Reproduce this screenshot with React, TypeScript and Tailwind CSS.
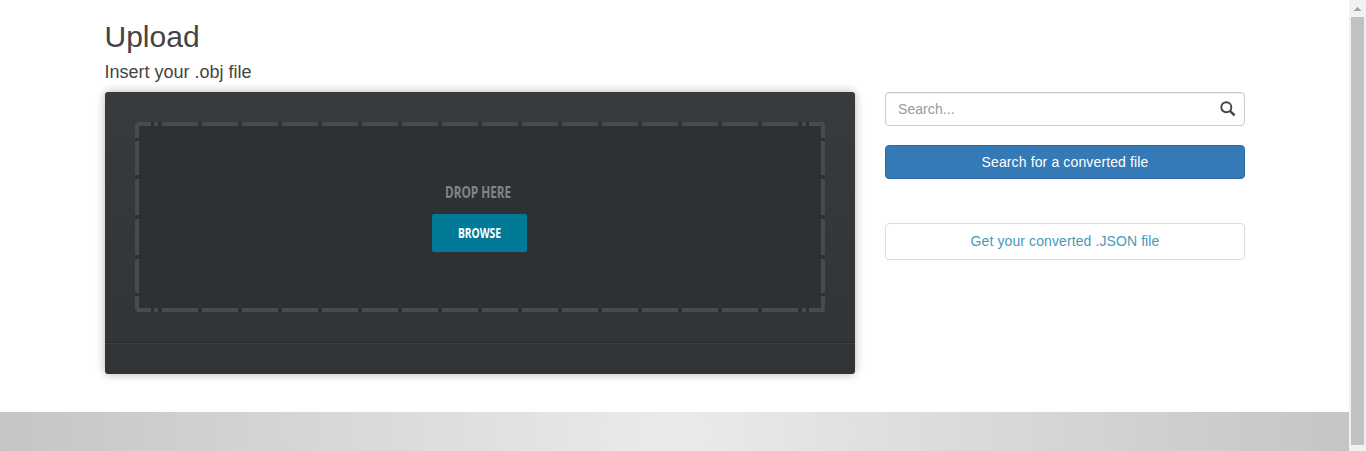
import React from "react";

const verticalDashes = [
  [19, 34],
  [57, 36],
  [97, 36],
  [137, 34],
];

function DashedFrame() {
  return (
    <svg className="absolute inset-0" width="690" height="190" fill="#464b4d" shapeRendering="crispEdges">
      <path d="M2 0H16V4H4V16H0V2L2 0Z" />
      <path d="M688 0H674V4H686V16H690V2L688 0Z" />
      <path d="M2 190H16V186H4V174H0V188L2 190Z" />
      <path d="M688 190H674V186H686V174H690V188L688 190Z" />
      {[0, 186].map((y) => (
        <g key={y}>
          <rect x="19" y={y} width="4" height="4" />
          <rect x="667" y={y} width="4" height="4" />
          {Array.from({ length: 16 }, (_, i) => (
            <rect key={i} x={27 + i * 40} y={y} width="36" height="4" />
          ))}
        </g>
      ))}
      {[0, 686].map((x) => (
        <g key={x}>
          {verticalDashes.map(([y, h]) => (
            <rect key={y} x={x} y={y} width="4" height={h} />
          ))}
        </g>
      ))}
    </svg>
  );
}

function DropPanel() {
  return (
    <section className="h-[282px] w-[750px] shrink-0 rounded-[3px] bg-linear-to-b from-[#373b3d] to-[#303437] shadow-[0_0_10px_rgba(0,0,0,0.3)]">
      <div className="h-[251px] border-b border-[#292c2e] p-[30px]">
        <div className="relative flex h-[190px] w-[690px] flex-col items-center rounded-[3px] bg-[#2e3134] pt-[59px] pr-[2px] font-['Open_Sans',sans-serif] font-bold">
          <DashedFrame />
          <div className="mr-[2px] h-[22px] origin-center scale-x-[0.735] text-[16px] leading-[22px] whitespace-nowrap text-[#7f858a]">
            DROP HERE
          </div>
          <button className="mt-[11px] flex h-[38px] w-[95px] items-center justify-center rounded-[2px] bg-[#007a96] pb-[2px] text-[14px] text-white">
            <span className="scale-x-[0.73]">BROWSE</span>
          </button>
        </div>
      </div>
      <div className="h-px bg-[#3b4043]" />
    </section>
  );
}

function SearchColumn() {
  return (
    <aside className="ml-[30px] w-[360px] shrink-0 text-[14px]">
      <div className="flex h-[34px] items-center justify-between rounded-[4px] border border-[#ccc] pr-2 pl-3 shadow-[inset_0_1px_1px_rgba(0,0,0,0.075)]">
        <span className="tracking-[0.07px] text-[#999]">Search...</span>
        <svg width="16" height="16" viewBox="0 0 16 16" fill="none" stroke="#444">
          <circle cx="6.3" cy="6.2" r="5" strokeWidth="1.9" />
          <path d="M9.9 9.8L14.6 14.3" strokeWidth="2.5" />
        </svg>
      </div>
      <button className="mt-[19px] block h-[34px] w-full rounded-[4px] border border-[#2e6da4] bg-[#337ab7] tracking-[0.13px] text-white">
        Search for a converted file
      </button>
      <button className="mt-11 block h-[37px] w-full rounded-[4px] border border-[#ddd] bg-white tracking-[0.1px] text-[#4499bc]">
        Get your converted .JSON file
      </button>
    </aside>
  );
}

export default function App() {
  return (
    <div className="flex h-[451px] w-full overflow-hidden bg-white font-['Liberation_Sans',Arial,sans-serif] text-[#444]">
      <div className="flex w-[1349px] shrink-0 flex-col">
        <main className="h-[412px] pt-5 pr-[104px] pl-[105px]">
          <h1 className="-ml-[0.5px] text-[30px] leading-[33px]">Upload</h1>
          <h2 className="mt-[9px] -ml-[0.5px] text-[18px] leading-5">Insert your .obj file</h2>
          <div className="mt-[10px] flex">
            <DropPanel />
            <SearchColumn />
          </div>
        </main>
        <footer className="h-[39px] bg-[radial-gradient(circle_at_center,#ebebeb_0%,#c5c5c5_100%)]" />
      </div>
      <div className="flex w-[17px] flex-col items-center bg-[#f1f1f1]">
        <div className="flex h-[17px] items-center justify-center">
          <svg width="7" height="4" viewBox="0 0 7 4" fill="#a3a3a3" shapeRendering="crispEdges">
            <path d="M3 0H4V1H5V2H6V3H7V4H0V3H1V2H2V1H3Z" />
          </svg>
        </div>
        <div className="h-[428px] w-[13px] bg-[#c1c1c1]" />
      </div>
    </div>
  );
}
